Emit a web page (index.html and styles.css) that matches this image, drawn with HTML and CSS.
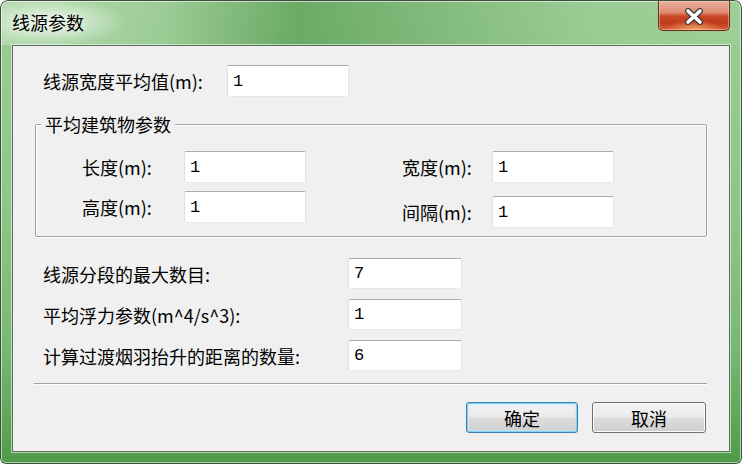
FILE: index.html
```html
<!DOCTYPE html>
<html lang="zh-CN">
<head>
<meta charset="utf-8">
<title>线源参数</title>
<link rel="stylesheet" href="styles.css">
</head>
<body>
<div class="window">
  <div class="titlebar">
    <span class="title">线源参数</span>
    <button class="close" type="button" aria-label="关闭">
      <svg width="20" height="17" viewBox="0 0 20 17">
        <path d="M4 3 L16 14 M16 3 L4 14" stroke="#3a3a3a" stroke-width="6" stroke-linecap="round" fill="none"/>
        <path d="M4 3 L16 14 M16 3 L4 14" stroke="#ffffff" stroke-width="3.6" stroke-linecap="round" fill="none"/>
      </svg>
    </button>
  </div>
  <div class="client">
    <div class="top-row">
      <span class="lbl lbl-top">线源宽度平均值(m):</span>
      <input class="field" type="text" value="1">
    </div>
    <fieldset class="group">
      <legend>平均建筑物参数</legend>
      <div class="group-body">
        <div class="g-col g-left">
          <div class="g-row"><span class="lbl lbl-l">长度(m):</span><input class="field" type="text" value="1"></div>
          <div class="g-row"><span class="lbl lbl-l">高度(m):</span><input class="field" type="text" value="1"></div>
        </div>
        <div class="g-col g-right">
          <div class="g-row"><span class="lbl lbl-r">宽度(m):</span><input class="field" type="text" value="1"></div>
          <div class="g-row"><span class="lbl lbl-r">间隔(m):</span><input class="field" type="text" value="1"></div>
        </div>
      </div>
    </fieldset>
    <div class="params">
      <span class="lbl">线源分段的最大数目:</span><input class="field field-s" type="text" value="7">
      <span class="lbl">平均浮力参数(m^4/s^3):</span><input class="field field-s" type="text" value="1">
      <span class="lbl">计算过渡烟羽抬升的距离的数量:</span><input class="field field-s" type="text" value="6">
    </div>
    <hr class="sep">
    <div class="actions">
      <button class="btn btn-default" type="button">确定</button>
      <button class="btn btn-cancel" type="button">取消</button>
    </div>
  </div>
</div>
</body>
</html>
```

FILE: styles.css
```css
* { box-sizing: border-box; }
html, body {
  margin: 0;
  padding: 0;
  width: 742px;
  height: 464px;
  overflow: hidden;
  background: #ffffff;
}
body {
  font-family: "Noto Sans CJK SC", "Noto Sans", sans-serif;
  color: #000;
}
.window {
  width: 742px;
  height: 464px;
  border-radius: 8px 8px 6px 6px;
  display: flex;
  flex-direction: column;
  padding: 0 12px 12px 12px;
  background:
    radial-gradient(ellipse 75px 24px at 52px 22px, rgba(255,255,255,0.75), rgba(255,255,255,0) 100%) no-repeat,
    linear-gradient(90deg, rgba(205,232,200,0.55) 0%, rgba(160,205,155,0.25) 22%, rgba(60,135,55,0.5) 40%, rgba(80,150,75,0.3) 60%, rgba(150,205,145,0.15) 80%, rgba(165,212,160,0.25) 100%) 0 0 / 100% 45px no-repeat,
    linear-gradient(180deg, #9ccd95 0%, #8ec687 45%, #78b972 75%, #4f9b49 100%);
  box-shadow: inset 0 0 0 1px #3f4f3e, inset 0 0 0 2px rgba(255,255,255,0.55);
}
.titlebar {
  height: 45px;
  display: flex;
  align-items: flex-start;
}
.title {
  margin-top: 11px;
  font-size: 18px;
  line-height: 22px;
  color: #000;
  text-shadow: 0 0 6px rgba(255,255,255,0.9);
}
.close {
  margin-left: auto;
  margin-top: 1px;
  width: 72px;
  height: 30px;
  padding: 0;
  border: 1px solid #6e2a1c;
  border-top: 0;
  border-radius: 0 0 5px 5px;
  background:
    radial-gradient(ellipse 30px 10px at 50% 100%, rgba(255,190,120,0.7), rgba(255,190,120,0) 100%),
    linear-gradient(180deg, #eab3a1 0%, #de8a70 40%, #c8492a 52%, #c03a1c 75%, #d2603a 100%);
  box-shadow: inset 0 0 0 1px rgba(255,220,200,0.45);
  display: flex;
  align-items: center;
  justify-content: center;
}
.close svg { display: block; margin-top: 1px; }
.client {
  flex: 1;
  background: #f0f0f0;
  border: 1px solid #5b6c5a;
  box-shadow: 0 0 0 1px rgba(255,255,255,0.55);
  padding: 19px 22px 0 22px;
}
.lbl {
  font-size: 18px;
  line-height: 20px;
  white-space: nowrap;
}
.field {
  width: 122px;
  height: 32px;
  margin: 0;
  border: 1px solid;
  border-color: #abadb3 #e2e3ea #e3e9ef #dbdfe6;
  border-radius: 2px;
  background: #fff;
  padding: 0 5px;
  font: 17px "Liberation Mono", monospace;
  color: #000;
  outline: none;
}
.field-s {
  width: 114px;
  height: 31px;
}
.top-row {
  display: flex;
  align-items: center;
  padding-left: 8px;
}
.lbl-top { width: 184px; }
.group {
  margin: 17px 0 0 0;
  padding: 17px 0 8px 0;
  min-inline-size: 0;
  border: 1px solid #a0a0a0;
  border-radius: 2px;
  box-shadow: inset 1px 1px 0 #ffffff, 1px 1px 0 #ffffff;
}
.group legend {
  margin-left: 5px;
  padding: 0 4px;
  font-size: 18px;
  line-height: 20px;
  background: #f0f0f0;
}
.group-body {
  display: flex;
  align-items: flex-start;
}
.g-col {
  display: flex;
  flex-direction: column;
}
.g-left { margin-left: 46px; gap: 8px; }
.g-right { margin-left: 96px; gap: 13px; }
.g-row {
  display: flex;
  align-items: center;
}
.lbl-l { width: 102px; }
.lbl-r { width: 90px; }
.params {
  margin-top: 21px;
  padding-left: 8px;
  display: grid;
  grid-template-columns: 305px 114px;
  row-gap: 10px;
  align-items: center;
}
.sep {
  margin: 12px 0 0 -1px;
  border: 0;
  height: 2px;
  background: linear-gradient(180deg, #a0a0a0 50%, #ffffff 50%);
}
.actions {
  margin-top: 17px;
  padding-right: 1px;
  display: flex;
  justify-content: flex-end;
  gap: 14px;
}
.btn {
  height: 31px;
  padding: 0;
  border: 1px solid #707070;
  border-radius: 3px;
  background: linear-gradient(180deg, #f2f2f2 0%, #ebebeb 48%, #dddddd 52%, #cfcfcf 100%);
  box-shadow: inset 0 0 0 1px #fbfbfb;
  font-family: "Noto Sans CJK SC", "Noto Sans", sans-serif;
  font-size: 18px;
  line-height: 20px;
  color: #000;
}
.btn-default {
  width: 112px;
  border-color: #3c7fb1;
  box-shadow: inset 0 0 0 1px #7fd3f2, inset 0 0 0 2px rgba(190,235,250,0.6);
}
.btn-cancel { width: 114px; }
```
